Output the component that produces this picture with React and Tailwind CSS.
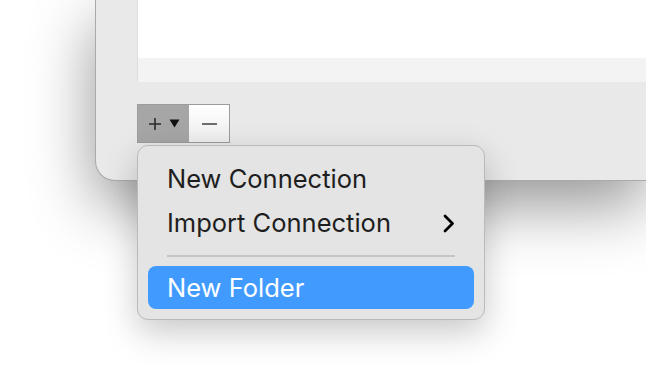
// Fenêtre macOS (coin bas-gauche) avec menu déroulant du bouton « + »
export default function App() {
  return (
    <div className="relative w-[646px] h-[392px] overflow-hidden bg-white" style={{ fontFamily: 'Inter, "Liberation Sans", sans-serif' }}>
      {/* ── Fenêtre ─────────────────────────────────── */}
      <div className="ml-[95px] h-[181px] bg-[#e8e9e8] border-l border-b border-[#a9aaa9] rounded-bl-[20px] shadow-[0_24px_64px_rgba(0,0,0,0.42)]">
        <div className="pl-[41px]">
          <div className="h-[58px] bg-white border-l border-[#dcdddc]" />
          <div className="h-[24px] bg-[#f2f3f2] border-l border-[#dcdddc]" />
          <div className="mt-[22px] flex h-[39px] w-[93px] border border-[#9b9c9b]">
            <div className="flex w-[51px] items-center justify-center gap-[7px] bg-[#a5a6a5] pl-[1px]">
              <svg width="14" height="14" viewBox="0 0 14 14">
                <path d="M7 1v12M1 7h12" stroke="#2a2a2a" strokeWidth="1.6" />
              </svg>
              <svg width="11" height="9" viewBox="0 0 11 9">
                <path d="M0.5 0.5h10L5.5 8.5z" fill="#111" />
              </svg>
            </div>
            <div className="flex flex-1 items-center justify-center bg-gradient-to-b from-white to-[#eeeeee]">
              <svg width="15" height="4" viewBox="0 0 15 4">
                <path d="M0 2h15" stroke="#333" strokeWidth="1.4" />
              </svg>
            </div>
          </div>
        </div>
      </div>

      {/* ── Menu déroulant ──────────────────────────── */}
      <div className="absolute left-[137px] top-[145px] w-[348px] rounded-[11px] border border-[#b9bab9] bg-[#e3e4e3] px-[10px] pt-[11px] pb-[10px] shadow-[0_12px_34px_rgba(0,0,0,0.22)] text-[25.5px] text-[#1e1e1e] leading-none">
        <div className="flex h-[44px] items-center pl-[19px]">New Connection</div>
        <div className="flex h-[44px] items-center justify-between pl-[19px] pr-[19px]">
          <span>Import Connection</span>
          <svg width="12" height="19" viewBox="0 0 12 19">
            <path d="M2 2l7.5 7.5L2 17" fill="none" stroke="#000" strokeWidth="2.8" strokeLinecap="round" strokeLinejoin="round" />
          </svg>
        </div>
        <div className="flex h-[21px] items-center px-[19px]">
          <div className="h-[2px] w-full bg-[#c4c5c4]" />
        </div>
        <div className="flex h-[43px] items-center rounded-[8px] bg-[#419bff] pl-[19px] text-white">New Folder</div>
      </div>
    </div>
  )
}
